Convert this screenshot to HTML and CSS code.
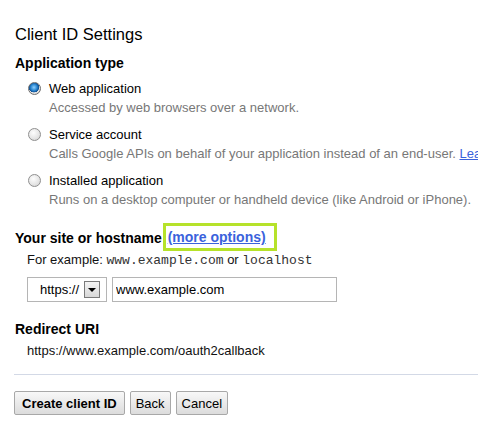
FILE: index.html
```html
<!DOCTYPE html>
<html lang="en">
<head>
    <meta charset="UTF-8">
    <meta name="viewport" content="width=device-width, initial-scale=1.0">
    <title>Client ID Settings</title>
    <link rel="stylesheet" href="styles.css">
</head>
<body>
    <div class="page">
        <h2>Client ID Settings</h2>

        <h3>Application type</h3>
        <div class="options">
            <label class="option">
                <input type="radio" name="apptype" checked>
                <span class="option-name">Web application</span>
            </label>
            <div class="option-desc">Accessed by web browsers over a network.</div>

            <label class="option">
                <input type="radio" name="apptype">
                <span class="option-name">Service account</span>
            </label>
            <div class="option-desc">Calls Google APIs on behalf of your application instead of an end-user. <a href="#">Learn more</a></div>

            <label class="option">
                <input type="radio" name="apptype">
                <span class="option-name">Installed application</span>
            </label>
            <div class="option-desc">Runs on a desktop computer or handheld device (like Android or iPhone).</div>
        </div>

        <h3 class="site-title">Your site or hostname <span class="highlight"><a href="#">(more options)</a></span></h3>
        <div class="hint">For example: <code>www.example.com</code> or <code>localhost</code></div>

        <div class="host-row">
            <div class="scheme">
                <span class="scheme-value">https://</span>
                <span class="scheme-arrow"></span>
            </div>
            <input type="text" class="host-input" value="www.example.com">
        </div>

        <h3>Redirect URI</h3>
        <div class="redirect">https://www.example.com/oauth2callback</div>

        <hr>

        <div class="actions">
            <button class="primary">Create client ID</button>
            <button>Back</button>
            <button>Cancel</button>
        </div>
    </div>
</body>
</html>
```

FILE: styles.css
```css
body {
    margin: 0;
    font-family: "Liberation Sans", Arial, sans-serif;
    font-size: 13px;
    color: #222;
    background: #fff;
    overflow: hidden;
}
.page {
    padding: 25px 0 0 15px;
}
h2 {
    font-size: 16.5px;
    font-weight: normal;
    color: #000;
    line-height: 18px;
    margin: 0 0 11px 0;
}
h3 {
    font-size: 14px;
    font-weight: bold;
    color: #000;
    line-height: 18px;
    margin: 0;
}
a {
    color: #3a62dc;
}
.options {
    padding: 7px 0 0 12px;
    margin-bottom: 20px;
}
.option {
    display: flex;
    align-items: center;
    line-height: 19px;
    color: #000;
}
.option input {
    appearance: none;
    -webkit-appearance: none;
    width: 13px;
    height: 13px;
    margin: 0 8px 0 1px;
    border: 1px solid #8f8f8f;
    border-radius: 50%;
    background: radial-gradient(circle at 40% 35%, #fdfdfd 0%, #e6e6e6 55%, #cfcfcf 100%);
    box-sizing: border-box;
}
.option input:checked {
    background:
        radial-gradient(circle at 45% 40%, #8fd0ff 0%, #2a86d0 35%, #0d4f94 55%, transparent 58%),
        radial-gradient(circle at 40% 35%, #fdfdfd 0%, #e6e6e6 55%, #cfcfcf 100%);
    border-color: #6d6d6d;
}
.option-desc {
    color: #777;
    line-height: 19px;
    padding-left: 22px;
    margin-bottom: 8px;
    white-space: nowrap;
}
.highlight {
    display: inline-block;
    border: 3px solid #b6e22a;
    padding: 2px 8px 2px 2px;
    margin: -8px 0 -8px -3px;
    vertical-align: 1px;
}
.hint {
    padding-left: 12px;
    line-height: 18px;
    margin-top: 4px;
    color: #111;
}
code {
    font-family: "Liberation Mono", "Courier New", monospace;
    font-size: 13px;
    color: #333;
}
.host-row {
    display: flex;
    gap: 5px;
    padding-left: 12px;
    margin: 7px 0 18px 0;
}
.scheme {
    display: flex;
    align-items: center;
    justify-content: flex-end;
    width: 80px;
    height: 25px;
    border: 1px solid #b5b5b5;
    box-sizing: border-box;
    padding-right: 6px;
    color: #000;
}
.scheme-value {
    margin-right: 5px;
}
.scheme-arrow {
    position: relative;
    width: 14px;
    height: 15px;
    border: 1px solid #7a7a7a;
    background: linear-gradient(#f4f4f4, #d8d8d8);
}
.scheme-arrow::after {
    content: "";
    position: absolute;
    left: 3px;
    top: 6px;
    border-left: 4px solid transparent;
    border-right: 4px solid transparent;
    border-top: 4px solid #000;
}
.host-input {
    width: 225px;
    height: 25px;
    box-sizing: border-box;
    border: 1px solid #b5b5b5;
    padding: 0 3px;
    font-family: "Liberation Sans", Arial, sans-serif;
    font-size: 13px;
    color: #000;
    outline: none;
}
.redirect {
    padding-left: 12px;
    line-height: 18px;
    margin-top: 4px;
    color: #111;
}
hr {
    border: none;
    border-top: 1px solid #d3d9e6;
    margin: 14px 0 16px -1px;
}
.actions {
    display: flex;
    gap: 5px;
    margin-left: -1px;
}
button {
    height: 24px;
    padding: 0 5px;
    font-family: "Liberation Sans", Arial, sans-serif;
    font-size: 13px;
    color: #000;
    border: 1px solid #a8a8a8;
    border-radius: 2px;
    background: linear-gradient(#f8f8f8, #dcdcdc);
}
button.primary {
    font-weight: bold;
    padding: 0 7px;
}
```
